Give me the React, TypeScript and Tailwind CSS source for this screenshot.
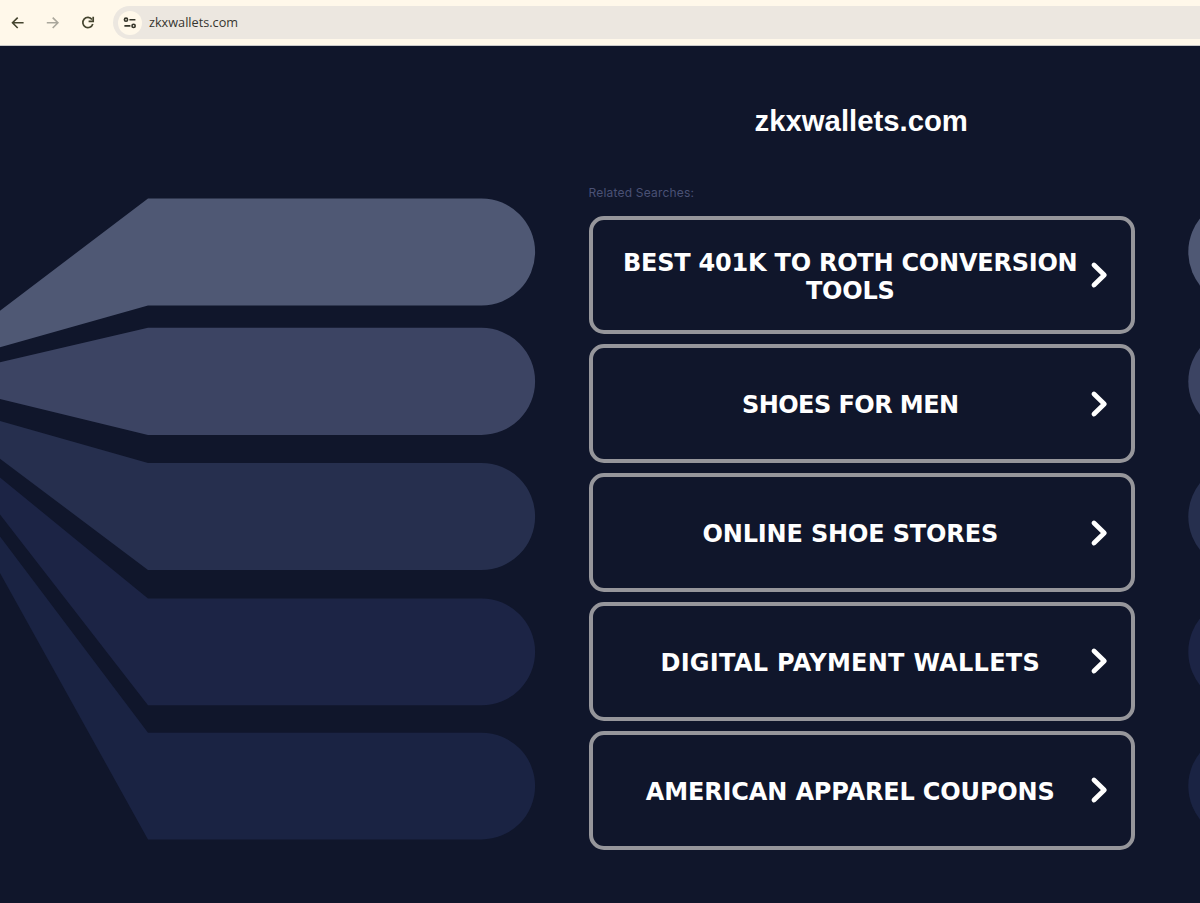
import clsx from 'clsx';

const searches = [
  { label: 'BEST 401K TO ROTH CONVERSION TOOLS', spacing: 'tracking-[-0.23px]' },
  { label: 'SHOES FOR MEN', spacing: 'tracking-[-0.55px]' },
  { label: 'ONLINE SHOE STORES', spacing: 'tracking-[-0.15px]' },
  { label: 'DIGITAL PAYMENT WALLETS', spacing: 'tracking-[0.29px]' },
  { label: 'AMERICAN APPAREL COUPONS', spacing: 'tracking-[-0.15px]' },
];

// top and bottom of each band, and where it meets the left edge
const bands = [
  { top: 152.5, bottom: 259.5, edgeTop: 264.7, edgeBottom: 301.3, color: '#4f5874' },
  { top: 281.8, bottom: 388.9, edgeTop: 316.2, edgeBottom: 353, color: '#3c4463' },
  { top: 416.9, bottom: 524, edgeTop: 375, edgeBottom: 412.7, color: '#262f4e' },
  { top: 552.5, bottom: 659.3, edgeTop: 431.5, edgeBottom: 468.5, color: '#1c2445' },
  { top: 686.7, bottom: 793.4, edgeTop: 490.5, edgeBottom: 527, color: '#1a2343' },
];

const BrowserBar = () => (
  <header className="flex h-[46px] items-start border-b border-[#c9c9c9] bg-[#fff8ea] pt-1.5">
    <div className="flex h-[33px] w-[113px] shrink-0 items-center">
      <svg className="ml-[11px] size-[14px]" viewBox="0 0 14 14" fill="none" stroke="#45452f" strokeWidth="1.6">
        <path d="M12.6 6.8H1.8M6.7 1.6 1.5 6.8l5.2 5.2" />
      </svg>
      <svg className="ml-[21px] size-[14px]" viewBox="0 0 14 14" fill="none" stroke="#aaa79c" strokeWidth="1.6">
        <path d="M.8 6.8h10.8M6.7 1.6 11.9 6.8l-5.2 5.2" />
      </svg>
      <svg className="ml-[21px] size-[14px]" viewBox="0 0 14 14" fill="none" stroke="#45452f" strokeWidth="1.7">
        <path d="M11 3.4A5.1 5.1 0 1 0 11.8 8" />
        <path d="M12.2.8v4.6H7.6" />
      </svg>
    </div>
    <div className="flex h-[33px] flex-1 items-center rounded-l-full bg-[#ece7e0] pl-[5px]">
      <div className="flex size-[24px] items-center justify-center rounded-full bg-[#fff8ea]">
        <svg className="size-[14px]" viewBox="0 0 14 14" fill="none" stroke="#35352a" strokeWidth="1.6">
          <circle cx="3" cy="3.7" r="1.6" />
          <path d="M6.4 3.7H12.4M1.4 9.9h6" />
          <circle cx="10.6" cy="9.9" r="1.6" />
        </svg>
      </div>
      <span className="ml-[7px] font-['Open_Sans',sans-serif] text-[12.7px] text-[#36352f]">zkxwallets.com</span>
    </div>
  </header>
);

const Backdrop = () => (
  <svg className="absolute inset-0 h-full w-full" viewBox="0 0 1200 857">
    {bands.map(({ top, bottom, edgeTop, edgeBottom, color }) => (
      <g key={color} fill={color}>
        <path
          d={`M0 ${edgeTop}L148 ${top}H481.6A53.5 ${(bottom - top) / 2} 0 0 1 481.6 ${bottom}H148L0 ${edgeBottom}Z`}
        />
        <circle cx="1241.8" cy={(top + bottom) / 2} r="53.5" />
      </g>
    ))}
  </svg>
);

export default function App() {
  return (
    <div className="flex h-[903px] w-[1200px] flex-col overflow-hidden bg-[#10162b]">
      <BrowserBar />
      <main className="relative flex-1">
        <Backdrop />
        <div className="relative ml-[588.5px] w-[546.5px]">
          <h1 className="pt-[57px] pr-px text-center font-['Liberation_Sans',sans-serif] text-[29.3px] leading-9 font-bold text-white">
            zkxwallets.com
          </h1>
          <p className="mt-[46px] font-['Inter',sans-serif] text-[12px] leading-4 tracking-[0.2px] text-[#4a5175]">
            Related Searches:
          </p>
          <div className="mt-[14.7px] flex flex-col gap-[10px]">
            {searches.map(({ label, spacing }) => (
              <a
                key={label}
                className="flex h-[118.8px] items-center rounded-[15px] border-4 border-[#96969b] pr-[23px] pl-[27px]"
              >
                <span
                  className={clsx(
                    "flex-1 pt-[3px] pr-[4px] text-center font-['DejaVu_Sans',sans-serif] text-[24px] leading-[28px] font-bold text-white",
                    spacing,
                  )}
                >
                  {label}
                </span>
                <svg className="ml-[5px] h-[28px] w-[18px] shrink-0" viewBox="0 0 18 28" fill="none">
                  <path
                    d="m4 4 10.3 10L4 24"
                    stroke="#fff"
                    strokeWidth="4.8"
                    strokeLinecap="round"
                    strokeLinejoin="round"
                  />
                </svg>
              </a>
            ))}
          </div>
        </div>
      </main>
    </div>
  );
}
